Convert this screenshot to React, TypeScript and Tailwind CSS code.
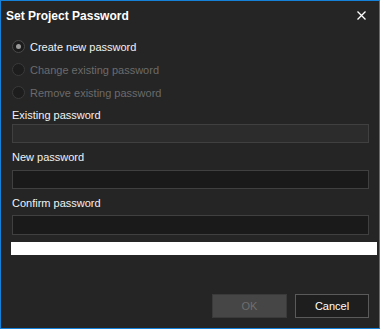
import { useState } from "react";

const options = [
  { label: "Create new password", enabled: true },
  { label: "Change existing password", enabled: false },
  { label: "Remove existing password", enabled: false },
];

const Radio = ({ label, enabled, checked }: { label: string; enabled: boolean; checked: boolean }) => (
  <div className="flex items-center h-[23px] gap-[5px]">
    <span
      className={`w-[13px] h-[13px] rounded-full border flex items-center justify-center ${
        enabled ? "border-[#4a4a4a] bg-[#1c1c1c]" : "border-[#3a3a3a] bg-[#1d1d1d]"
      }`}
    >
      {checked && <span className="w-[5px] h-[5px] rounded-full bg-[#9a9a9a]" />}
    </span>
    <span className={enabled ? "text-[#f2f2f2]" : "text-[#6b6b6b]"}>{label}</span>
  </div>
);

const App = () => {
  const [selected] = useState(0);

  return (
    <div
      className="w-[380px] h-[329px] border border-[#1681d8] bg-[#252525] flex flex-col text-[11px] leading-[14px]"
      style={{ fontFamily: '"Liberation Sans", Arial, sans-serif' }}
    >
      {/* title bar */}
      <div className="h-[30px] flex items-center justify-between pl-[5px] pr-[13px]">
        <h2 className="text-[12px] font-bold text-white">Set Project Password</h2>
        <svg width="9" height="9" viewBox="0 0 9 9" className="mt-[-1px]">
          <path d="M0.5 0.5L8.5 8.5M8.5 0.5L0.5 8.5" stroke="#ffffff" strokeWidth="1.3" />
        </svg>
      </div>

      <div className="flex flex-col flex-1 pl-[11px] pr-[10px] pt-[4px] pb-[10px]">
        {options.map((o, i) => (
          <Radio key={o.label} label={o.label} enabled={o.enabled} checked={i === selected} />
        ))}

        <p className="mt-[4px] text-[#f2f2f2]">Existing password</p>
        <div className="mt-[2px] h-[19px] border border-[#404040] bg-[#2c2c2c]"></div>

        <p className="mt-[7px] text-[#f2f2f2]">New password</p>
        <div className="mt-[6px] h-[19px] border border-[#404040] bg-[#1a1a1a]"></div>

        <p className="mt-[7px] text-[#f2f2f2]">Confirm password</p>
        <div className="mt-[5px] h-[20px] border border-[#404040] bg-[#1a1a1a]"></div>

        <div className="mt-[7px] h-[13px] bg-white -ml-[1px] -mr-[8px]"></div>

        <div className="mt-auto flex justify-end gap-[8px]">
          <button className="w-[75px] h-[24px] border border-[#3a3a3a] bg-[#464646] text-[#6e6e6e]">
            OK
          </button>
          <button className="w-[74px] h-[24px] border border-[#5a5a5a] bg-[#1e1e1e] text-white">
            Cancel
          </button>
        </div>
      </div>
    </div>
  );
};

export default App;
